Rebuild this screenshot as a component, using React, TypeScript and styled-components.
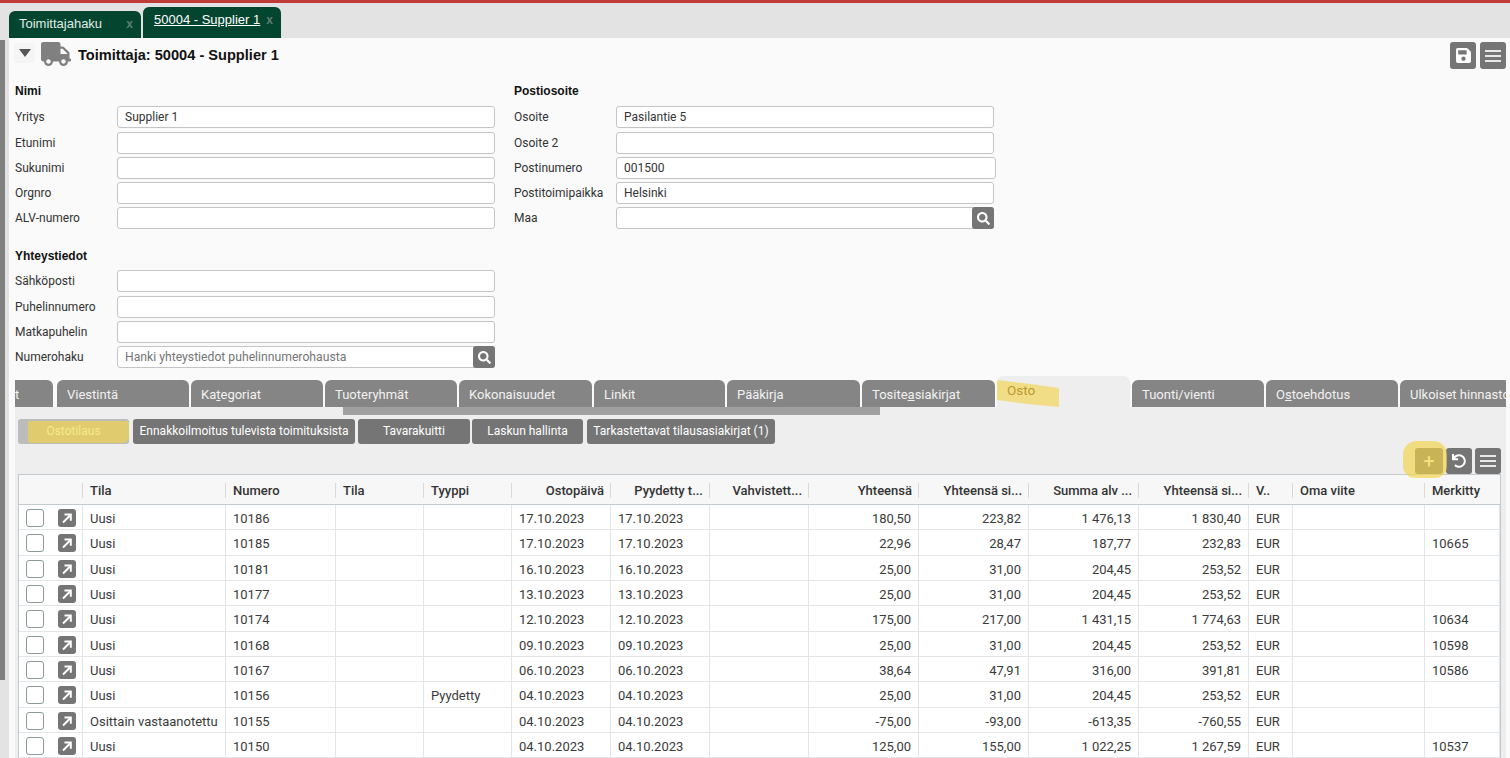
import React from "react";
import styled, { createGlobalStyle } from "styled-components";
import { FaTruck, FaSave, FaSearch, FaUndo } from "react-icons/fa";

const Global = createGlobalStyle`
  html, body { margin: 0; padding: 0; overflow: hidden; background: #e3e3e3; }
  body { font-family: Roboto, "Liberation Sans", sans-serif; font-size: 12px; color: #333; }
  * { box-sizing: border-box; }
`;

const Page = styled.div`
  position: relative;
  width: 1510px;
  height: 758px;
  overflow: hidden;
  display: flex;
  flex-direction: column;
  background: #e3e3e3;
  border-top: 3px solid #c13a3a;
`;
const TopTabs = styled.div`
  height: 35px;
  flex: none;
  display: flex;
  align-items: flex-end;
  gap: 2px;
  padding-left: 9px;
`;
const TopTab = styled.div<{ $active?: boolean }>`
  height: ${(p) => (p.$active ? 31 : 27)}px;
  width: ${(p) => (p.$active ? 138 : 132)}px;
  background: #044530;
  border-radius: 6px 6px 0 0;
  font-family: "Liberation Sans", sans-serif;
  font-size: 13px;
  padding: 5px 0 0 ${(p) => (p.$active ? 11 : 10)}px;
  display: flex;
  justify-content: space-between;
  span:first-child {
    text-decoration: ${(p) => (p.$active ? "underline" : "none")};
    color: ${(p) => (p.$active ? "#fff" : "#e0ebe6")};
  }
`;
const TabClose = styled.span`
  font-family: "Liberation Sans", sans-serif;
  font-weight: bold;
  font-size: 12px;
  color: #5d7f72;
  margin: 1px 8px 0 0;
`;
const Body = styled.div`
  flex: 1;
  display: flex;
  min-height: 0;
`;
const LeftRail = styled.div`
  width: 5px;
  margin-top: 2px;
  height: 640px;
  background: #808080;
  flex: none;
`;
const Gutter = styled.div`
  width: 4px;
  flex: none;
`;
const Main = styled.div`
  flex: 1;
  min-width: 0;
  background: #fafafa;
  display: flex;
  flex-direction: column;
`;
const Header = styled.div`
  height: 34px;
  flex: none;
  display: flex;
  align-items: flex-start;
  padding: 3px 4px 0 5px;
`;
const Caret = styled.div`
  width: 21px;
  height: 20px;
  margin-top: 2px;
  background: #f5f5f5;
  border-radius: 3px;
  display: flex;
  align-items: center;
  justify-content: center;
  &::after {
    content: "";
    border-left: 6px solid transparent;
    border-right: 6px solid transparent;
    border-top: 8px solid #555;
  }
`;
const TruckWrap = styled.div`
  margin: 0 0 0 6px;
  height: 26px;
  display: flex;
  align-items: center;
  color: #808080;
  font-size: 30px;
`;
const Title = styled.div`
  margin: 6px 0 0 7px;
  font-family: "Liberation Sans", sans-serif;
  font-weight: bold;
  font-size: 14.6px;
  color: #111;
  flex: 1;
`;
const IconBtn = styled.div<{ $w?: number; $h?: number; $size?: number }>`
  width: ${(p) => p.$w ?? 26}px;
  height: ${(p) => p.$h ?? 27}px;
  background: #757575;
  border-radius: 3px;
  color: #fff;
  font-size: ${(p) => p.$size ?? 13}px;
  display: flex;
  align-items: center;
  justify-content: center;
  flex: none;
`;
const HeadBtns = styled.div`
  display: flex;
  gap: 4px;
  margin-top: 1px;
`;
const Bars = styled.div`
  width: 16px;
  height: 12px;
  border-top: 2px solid #e8e8e8;
  border-bottom: 2px solid #e8e8e8;
  position: relative;
  &::after {
    content: "";
    position: absolute;
    left: 0;
    right: 0;
    top: 3px;
    height: 2px;
    background: #e8e8e8;
  }
`;
const FormArea = styled.div`
  height: 304px;
  flex: none;
  display: flex;
  padding: 12px 0 0 6px;
`;
const Column = styled.div`
  width: 499px;
  flex: none;
`;
const SectionTitle = styled.div<{ $top?: number; $bottom?: number }>`
  font-family: "Liberation Sans", sans-serif;
  font-weight: bold;
  font-size: 12px;
  color: #111;
  height: 14px;
  line-height: 14px;
  margin-top: ${(p) => p.$top ?? 0}px;
  margin-bottom: ${(p) => p.$bottom ?? 8.3}px;
`;
const FieldRow = styled.div`
  display: flex;
  align-items: center;
  height: 22px;
  margin-bottom: 3.25px;
`;
const FieldLabel = styled.div`
  width: 102px;
  flex: none;
  color: #333;
  font-size: 12px;
`;
const FieldBox = styled.div<{ $w?: number; $placeholder?: boolean }>`
  width: ${(p) => p.$w ?? 378}px;
  height: 22px;
  background: #fff;
  border: 1px solid #c4c4c4;
  border-radius: 3px;
  padding-left: 7px;
  line-height: 20px;
  font-size: ${(p) => (p.$placeholder ? 12.2 : 12)}px;
  color: ${(p) => (p.$placeholder ? "#757575" : "#333")};
  position: relative;
`;
const SearchBtn = styled(IconBtn)`
  position: absolute;
  right: -1px;
  top: -1px;
`;
const RowTabs = styled.div`
  height: 31px;
  flex: none;
  position: relative;
  display: flex;
  align-items: flex-end;
  gap: 2px;
  margin: 0 4px 0 6px;
  overflow: hidden;
`;
const TabSpacer = styled.div`
  width: 0;
  flex: none;
`;
const PTab = styled.div<{ $w: number; $active?: boolean }>`
  width: ${(p) => p.$w}px;
  flex: none;
  height: ${(p) => (p.$active ? 31 : 27)}px;
  background: ${(p) => (p.$active ? "#eeeeee" : "#858585")};
  border-radius: 6px 6px 0 0;
  color: #f2f2f2;
  font-size: 13px;
  line-height: ${(p) => (p.$active ? 28 : 29)}px;
  padding-left: 10px;
  white-space: nowrap;
  overflow: hidden;
  position: relative;
`;
const EdgeTab = styled(PTab)`
  padding-left: 0;
  border-radius: 0 6px 0 0;
`;
const OstoText = styled.span`
  position: relative;
  z-index: 1;
  color: #b89a30;
  font-size: 13.5px;
`;
const Panel = styled.div`
  flex: 1;
  background: #eeeeee;
  margin: 0 4px 0 6px;
  position: relative;
  display: flex;
  flex-direction: column;
`;
const Scrollbar = styled.div`
  position: absolute;
  left: 328px;
  top: 0;
  width: 537px;
  height: 8px;
  background: #a0a0a0;
`;
const SubTabs = styled.div`
  display: flex;
  height: 25px;
  flex: none;
  margin: 12px 0 0 3px;
`;
const SubTab = styled.div<{ $w: number; $ml?: number; $active?: boolean }>`
  width: ${(p) => p.$w}px;
  margin-left: ${(p) => p.$ml ?? 0}px;
  background: ${(p) => (p.$active ? "#bcbcbc" : "#757575")};
  border-radius: 3px;
  color: #fff;
  font-size: 12px;
  line-height: 24px;
  text-align: center;
  white-space: nowrap;
  flex: none;
  position: relative;
`;
const SubMarkText = styled.span`
  position: relative;
  z-index: 1;
  color: #f6e98e;
`;
const ToolRow = styled.div`
  display: flex;
  justify-content: flex-end;
  gap: 3px;
  height: 26px;
  flex: none;
  margin: 4px 5px 0 0;
`;
const TableBox = styled.div`
  margin-left: 3px;
  width: 1483px;
  flex: 1;
  background: #fff;
  border: 1px solid #c3cbd0;
  border-bottom: none;
  overflow: hidden;
`;
const grid = "64px 143px 110px 88px 88px 99px 99px 99px 110px 110px 110px 110px 44px 132px 1fr";
const HeadRow = styled.div`
  display: grid;
  grid-template-columns: ${grid};
  height: 30px;
  background: #f7f7f7;
  border-bottom: 1px solid #c3cbd0;
`;
const HeadCell = styled.div<{ $right?: boolean; $sep?: boolean }>`
  font-family: Roboto, sans-serif;
  font-weight: 500;
  font-size: 13px;
  color: #333;
  line-height: 31px;
  padding: 0 ${(p) => (p.$right ? "7px" : "7px")};
  text-align: ${(p) => (p.$right ? "right" : "left")};
  white-space: nowrap;
  overflow: hidden;
  position: relative;
  &::after {
    content: "";
    display: ${(p) => (p.$sep === false ? "none" : "block")};
    position: absolute;
    right: 0;
    top: 8px;
    bottom: 6px;
    width: 1px;
    background: #d9d9d9;
  }
`;
const Row = styled.div`
  display: grid;
  grid-template-columns: ${grid};
  height: 25.33px;
  border-bottom: 1px solid #e2e6e8;
`;
const Cell = styled.div<{ $right?: boolean }>`
  border-right: 1px solid #e2e6e8;
  padding: 0 7px;
  font-size: 13px;
  line-height: 27px;
  text-align: ${(p) => (p.$right ? "right" : "left")};
  white-space: nowrap;
  overflow: hidden;
  color: #3a3a3a;
`;
const ActionCell = styled.div`
  border-right: 1px solid #e2e6e8;
  display: flex;
  align-items: center;
  padding: 2px 0 0 7px;
  gap: 14px;
`;
const Check = styled.div`
  width: 18px;
  height: 18px;
  border: 1px solid #8c9a98;
  border-radius: 3px;
  background: #fff;
`;
const Go = styled.div`
  width: 18px;
  height: 18px;
  background: #757575;
  border-radius: 3px;
  display: flex;
  align-items: center;
  justify-content: center;
`;
const Mark = styled.div`
  position: absolute;
  background: rgba(242, 212, 72, 0.67);
  pointer-events: none;
`;
const SubMark = styled(Mark)`
  left: 10px;
  top: 2px;
  width: 101px;
  height: 22px;
  border-radius: 2px 2px 6px 3px;
`;
const OstoMark = styled.svg`
  position: absolute;
  left: 0;
  top: 0;
  pointer-events: none;
`;
const PlusWrap = styled.div`
  position: relative;
`;
const PlusMark = styled(Mark)`
  left: -12px;
  top: -7px;
  width: 44px;
  height: 37px;
  border-radius: 14px 14px 12px 12px;
`;

const tabs = [
  { n: "Viestintä", w: 132 },
  { n: <>Ka<u>t</u>egoriat</>, w: 132 },
  { n: "Tuoteryhmät", w: 132 },
  { n: "Kokonaisuudet", w: 133 },
  { n: "Linkit", w: 131 },
  { n: "Pääkirja", w: 133 },
  { n: <>Tosite<u>a</u>siakirjat</>, w: 133 },
];
const headers: [string, boolean][] = [
  ["", false], ["Tila", false], ["Numero", false], ["Tila", false], ["Tyyppi", false],
  ["Ostopäivä", true], ["Pyydetty t...", true], ["Vahvistett...", true], ["Yhteensä", true],
  ["Yhteensä si...", true], ["Summa alv ...", true], ["Yhteensä si...", true], ["V..", false],
  ["Oma viite", false], ["Merkitty", false],
];
const rows = [
  ["Uusi","10186","","","17.10.2023","17.10.2023","","180,50","223,82","1 476,13","1 830,40","EUR","",""],
  ["Uusi","10185","","","17.10.2023","17.10.2023","","22,96","28,47","187,77","232,83","EUR","","10665"],
  ["Uusi","10181","","","16.10.2023","16.10.2023","","25,00","31,00","204,45","253,52","EUR","",""],
  ["Uusi","10177","","","13.10.2023","13.10.2023","","25,00","31,00","204,45","253,52","EUR","",""],
  ["Uusi","10174","","","12.10.2023","12.10.2023","","175,00","217,00","1 431,15","1 774,63","EUR","","10634"],
  ["Uusi","10168","","","09.10.2023","09.10.2023","","25,00","31,00","204,45","253,52","EUR","","10598"],
  ["Uusi","10167","","","06.10.2023","06.10.2023","","38,64","47,91","316,00","391,81","EUR","","10586"],
  ["Uusi","10156","","Pyydetty","04.10.2023","04.10.2023","","25,00","31,00","204,45","253,52","EUR","",""],
  ["Osittain vastaanotettu","10155","","","04.10.2023","04.10.2023","","-75,00","-93,00","-613,35","-760,55","EUR","",""],
  ["Uusi","10150","","","04.10.2023","04.10.2023","","125,00","155,00","1 022,25","1 267,59","EUR","","10537"],
];
const rightCols = new Set([7, 8, 9, 10]);

const Field = ({ label, value, w, search, placeholder }: { label: string; value?: string; w?: number; search?: boolean; placeholder?: boolean }) => (
  <FieldRow>
    <FieldLabel>{label}</FieldLabel>
    <FieldBox $w={w} $placeholder={placeholder}>
      {value}
      {search && (
        <SearchBtn $w={22} $h={22}>
          <FaSearch />
        </SearchBtn>
      )}
    </FieldBox>
  </FieldRow>
);

export default function App() {
  return (
    <Page>
      <Global />
      <TopTabs>
        <TopTab><span>Toimittajahaku</span><TabClose>x</TabClose></TopTab>
        <TopTab $active><span>50004 - Supplier 1</span><TabClose>x</TabClose></TopTab>
      </TopTabs>
      <Body>
        <LeftRail />
        <Gutter />
        <Main>
          <Header>
            <Caret />
            <TruckWrap><FaTruck /></TruckWrap>
            <Title>Toimittaja: 50004 - Supplier 1</Title>
            <HeadBtns>
              <IconBtn $size={17}><FaSave /></IconBtn>
              <IconBtn><Bars /></IconBtn>
            </HeadBtns>
          </Header>
          <FormArea>
            <Column>
              <SectionTitle>Nimi</SectionTitle>
              <Field label="Yritys" value="Supplier 1" />
              <Field label="Etunimi" />
              <Field label="Sukunimi" />
              <Field label="Orgnro" />
              <Field label="ALV-numero" />
              <SectionTitle $top={20} $bottom={7}>Yhteystiedot</SectionTitle>
              <Field label="Sähköposti" />
              <Field label="Puhelinnumero" />
              <Field label="Matkapuhelin" />
              <Field label="Numerohaku" value="Hanki yhteystiedot puhelinnumerohausta" placeholder search />
            </Column>
            <Column>
              <SectionTitle>Postiosoite</SectionTitle>
              <Field label="Osoite" value="Pasilantie 5" />
              <Field label="Osoite 2" />
              <Field label="Postinumero" value="001500" w={380} />
              <Field label="Postitoimipaikka" value="Helsinki" />
              <Field label="Maa" search />
            </Column>
          </FormArea>
          <RowTabs>
            <EdgeTab $w={38}>t</EdgeTab>
            <TabSpacer />
            {tabs.map((t, i) => <PTab key={i} $w={t.w}>{t.n}</PTab>)}
            <PTab $w={133} $active>
              <OstoMark width="62" height="31" viewBox="0 0 62 31">
                <path d="M0 4 L34 8 L62 12 L62 31 L30 28 L0 24 Z" fill="rgba(245,212,80,0.65)" />
              </OstoMark>
              <OstoText>Osto</OstoText>
            </PTab>
            <PTab $w={132}>Tuonti/vienti</PTab>
            <PTab $w={132}>O<u>s</u>toehdotus</PTab>
            <PTab $w={110}>Ulkoiset hinnastot</PTab>
          </RowTabs>
          <Panel>
            <Scrollbar />
            <SubTabs>
              <SubTab $w={111} $active>
                <SubMark />
                <SubMarkText>Ostotilaus</SubMarkText>
              </SubTab>
              <SubTab $w={222} $ml={4}>Ennakkoilmoitus tulevista toimituksista</SubTab>
              <SubTab $w={112} $ml={3}>Tavarakuitti</SubTab>
              <SubTab $w={111} $ml={2}>Laskun hallinta</SubTab>
              <SubTab $w={188} $ml={4}>Tarkastettavat tilausasiakirjat (1)</SubTab>
            </SubTabs>
            <ToolRow>
              <PlusWrap>
                <PlusMark />
                <IconBtn $w={28} $h={26} $size={20}>+</IconBtn>
              </PlusWrap>
              <IconBtn $w={26} $h={26} $size={14}><FaUndo /></IconBtn>
              <IconBtn $w={26} $h={26}><Bars /></IconBtn>
            </ToolRow>
            <TableBox>
              <HeadRow>
                {headers.map(([h, r], i) => <HeadCell key={i} $right={r} $sep={i < 14}>{h}</HeadCell>)}
              </HeadRow>
              {rows.map((r, i) => (
                <Row key={i}>
                  <ActionCell>
                    <Check />
                    <Go>
                      <svg width="12" height="12" viewBox="0 0 12 12" fill="none" stroke="#fff" strokeWidth="2">
                        <path d="M2 10.5 L9.5 3" />
                        <path d="M3.5 2.5 H9.8 V8.8" />
                      </svg>
                    </Go>
                  </ActionCell>
                  {r.map((c, j) => <Cell key={j} $right={rightCols.has(j)}>{c}</Cell>)}
                </Row>
              ))}
            </TableBox>
          </Panel>
        </Main>
      </Body>
    </Page>
  );
}
